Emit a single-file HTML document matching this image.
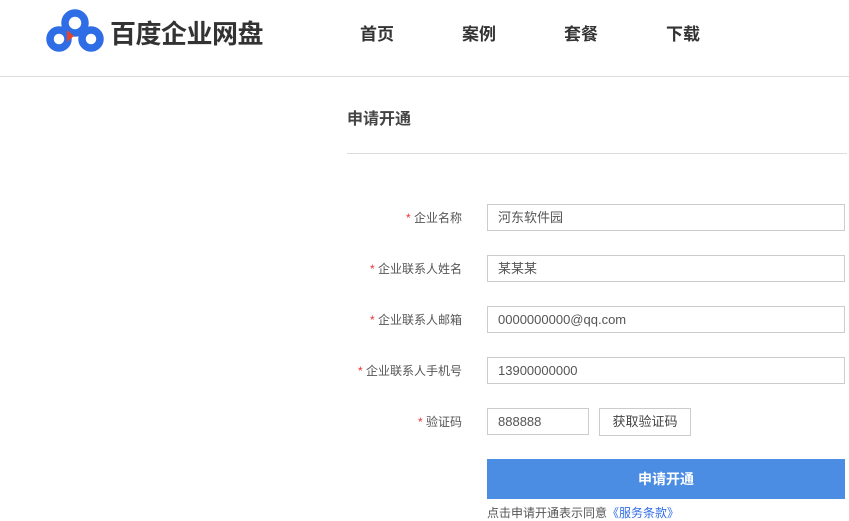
<!DOCTYPE html>
<html><head><meta charset="utf-8"><style>
body{margin:0;width:849px;height:521px;background:#fff;font-family:"Liberation Sans","Noto Sans CJK SC",sans-serif;position:relative;overflow:hidden}
.a{position:absolute}
.nav{font-size:17px;font-weight:bold;color:#333;top:20px}
.lab{font-size:12px;color:#555;text-align:right;width:200px;left:262px}
.lab b{color:#e33;font-weight:normal}
.in{border:1px solid #ccc;height:27px;left:487px;width:358px;font-size:13px;color:#555;line-height:25px;padding-left:10px;box-sizing:border-box}
</style></head><body>
<svg class="a" style="left:46px;top:8px" width="60" height="46" viewBox="0 0 60 46">
<circle cx="29" cy="15" r="10" fill="none" stroke="#2f6de6" stroke-width="7.5"/>
<circle cx="13" cy="31" r="9" fill="none" stroke="#2f6de6" stroke-width="7.5"/>
<circle cx="45" cy="31" r="9" fill="none" stroke="#2f6de6" stroke-width="7.5"/>
<path d="M21 22 L28 28 L21 34 Z" fill="#e2442c"/>
</svg>
<div class="a" style="left:110px;top:14px;font-size:26px;color:#333;font-weight:bold;letter-spacing:-0.5px">百度企业网盘</div>
<div class="a nav" style="left:360px">首页</div>
<div class="a nav" style="left:462px">案例</div>
<div class="a nav" style="left:564px">套餐</div>
<div class="a nav" style="left:666px">下载</div>
<div class="a" style="left:0;top:76px;width:849px;height:1px;background:#ddd"></div>
<div class="a" style="left:347px;top:105px;font-size:16px;color:#444;font-weight:bold">申请开通</div>
<div class="a" style="left:347px;top:153px;width:500px;height:1px;background:#ddd"></div>
<div class="a lab" style="top:209px"><b>*</b> 企业名称</div>
<div class="a in" style="top:204px">河东软件园</div>
<div class="a lab" style="top:260px"><b>*</b> 企业联系人姓名</div>
<div class="a in" style="top:255px">某某某</div>
<div class="a lab" style="top:311px"><b>*</b> 企业联系人邮箱</div>
<div class="a in" style="top:306px">0000000000@qq.com</div>
<div class="a lab" style="top:362px"><b>*</b> 企业联系人手机号</div>
<div class="a in" style="top:357px">13900000000</div>
<div class="a lab" style="top:413px"><b>*</b> 验证码</div>
<div class="a in" style="top:408px;width:102px">888888</div>
<div class="a" style="left:599px;top:408px;width:92px;height:28px;border:1px solid #ccc;box-sizing:border-box;font-size:13px;color:#444;text-align:center;line-height:26px">获取验证码</div>
<div class="a" style="left:487px;top:459px;width:358px;height:40px;background:#4a8de2;color:#fff;font-size:14px;font-weight:bold;text-align:center;line-height:40px">申请开通</div>
<div class="a" style="left:487px;top:504px;font-size:12px;color:#555">点击申请开通表示同意<span style="color:#2f6de6">《服务条款》</span></div>
</body></html>
